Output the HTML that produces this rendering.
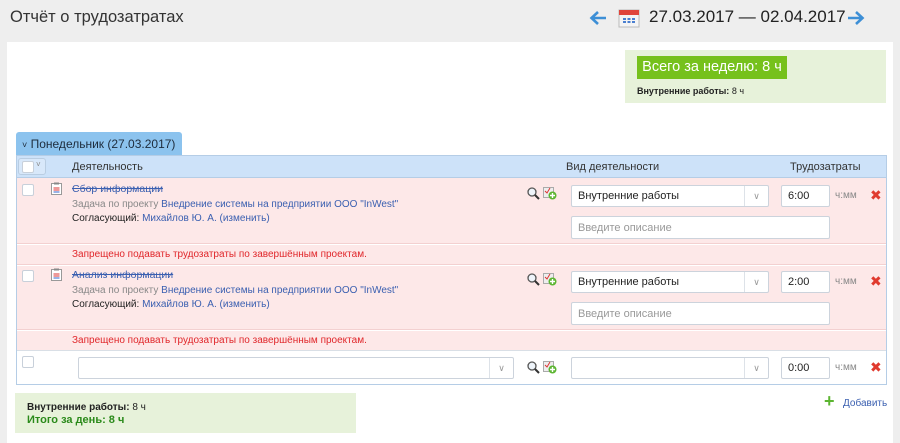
<!DOCTYPE html>
<html><head><meta charset="utf-8"><style>
*{box-sizing:border-box;margin:0;padding:0}
body{width:900px;height:443px;background:#eeeeee;font-family:"Liberation Sans","DejaVu Sans",sans-serif;position:relative;overflow:hidden;color:#222}
.a{position:absolute}
.panel{left:7px;top:42px;width:886px;height:401px;background:#fff}
.t11{font-size:11px}
.link{color:#3a5fb0}
.inp{position:absolute;background:#fff;border:1px solid #ccd3dc;border-radius:2px;font-size:11px;padding:0 6px;display:flex;align-items:center;color:#222}
.sel .arr{position:absolute;right:0;top:0;bottom:0;width:24px;border-left:1px solid #dde2e8;display:flex;align-items:center;justify-content:center;color:#999;font-size:9px}
.cb{position:absolute;width:12px;height:12px;border:1px solid #c8d0da;border-radius:2px;background:#fff}
.x{color:#e03a2e;font-size:14px;font-weight:bold}
.gray{color:#888}
.strike{text-decoration:line-through}
</style></head><body>
<div class="a" style="left:10px;top:8px;font-size:16.5px;color:#333">Отчёт о трудозатратах</div>
<svg class="a" style="left:588px;top:9px" width="20" height="18" viewBox="0 0 20 18"><path d="M18 9H4M10 3L3.5 9L10 15" stroke="#3d8fd6" stroke-width="2.6" fill="none"/></svg>
<svg class="a" style="left:618px;top:8px" width="22" height="20" viewBox="0 0 22 20"><rect x="1" y="2" width="20" height="17" fill="#f4f4f4" stroke="#bbb"/><rect x="1" y="2" width="20" height="5" fill="#e0443a"/><g fill="#4a7fd0"><rect x="5" y="10" width="3" height="2"/><rect x="9.5" y="10" width="3" height="2"/><rect x="14" y="10" width="3" height="2"/><rect x="5" y="13" width="3" height="2"/><rect x="9.5" y="13" width="3" height="2"/><rect x="14" y="13" width="3" height="2"/></g></svg>
<div class="a" style="left:649px;top:7px;font-size:17px;color:#222">27.03.2017 — 02.04.2017</div>
<svg class="a" style="left:846px;top:9px" width="20" height="18" viewBox="0 0 20 18"><path d="M2 9H16M10 3L16.5 9L10 15" stroke="#3d8fd6" stroke-width="2.6" fill="none"/></svg>
<div class="a panel"></div>
<div class="a" style="left:625px;top:50px;width:261px;height:53px;background:#e7f2da"></div>
<div class="a" style="left:637px;top:56px;width:150px;height:23px;background:#76c11c;color:#fff;font-size:14.5px;line-height:23px;text-align:center">Всего за неделю: 8 ч</div>
<div class="a" style="left:637px;top:86px;font-size:9px"><b>Внутренние работы:</b> 8 ч</div>

<div class="a" style="left:16px;top:132px;width:166px;height:24px;background:#8cc3ee;border-radius:3px 3px 0 0;font-size:12px;line-height:24px;padding-left:6px;color:#1e2c3c"><span style="font-size:9px">&#x2C5;</span> Понедельник (27.03.2017)</div>
<div class="a" style="left:16px;top:155px;width:871px;height:230px;border:1px solid #b5cde6;background:#fff"></div>
<div class="a" style="left:17px;top:156px;width:869px;height:22px;background:#cde2f9;border-bottom:1px solid #b5cde6"></div>
<div class="a" style="left:18px;top:158px;width:28px;height:17px;border:1px solid #b9cde2;border-radius:3px;background:#d8e8fa"></div>
<div class="cb" style="left:22px;top:161px"></div>
<div class="a gray" style="left:36px;top:160px;font-size:8px">&#x2C5;</div>
<div class="a t11" style="left:72px;top:161px;color:#333">Деятельность</div>
<div class="a t11" style="left:566px;top:161px;color:#333">Вид деятельности</div>
<div class="a t11" style="left:790px;top:161px;color:#333">Трудозатраты</div>

<div class="a" style="left:17px;top:178px;width:869px;height:66px;background:#fde8e8;border-bottom:1px solid #f3d0d0"></div>
<div class="a" style="left:17px;top:245px;width:869px;height:20px;background:#fde8e8;border-bottom:1px solid #f3d0d0"></div>
<div class="a" style="left:17px;top:266px;width:869px;height:64px;background:#fde8e8;border-bottom:1px solid #f3d0d0"></div>
<div class="a" style="left:17px;top:331px;width:869px;height:20px;background:#fde8e8;border-bottom:1px solid #d9dfe6"></div>

<div class="cb" style="left:22px;top:184px"></div>
<svg class="a" style="left:51px;top:182px" width="12" height="13"><rect x="0.5" y="1.5" width="10" height="11" fill="#fff" stroke="#999"/><rect x="3" y="0.5" width="5" height="2" fill="#888"/><path d="M2.5 6H8.5M2.5 8H8.5" stroke="#d33" stroke-width="1"/><path d="M2.5 10H8.5" stroke="#36c"/></svg>
<div class="a t11 link strike" style="left:72px;top:183px;font-size:10.5px">Сбор информации</div>
<div class="a" style="left:72px;top:199px;font-size:10px"><span class="gray">Задача по проекту</span> <span class="link">Внедрение системы на предприятии ООО "InWest"</span></div>
<div class="a" style="left:72px;top:213px;font-size:10px">Согласующий: <span class="link">Михайлов Ю. А. (изменить)</span></div>
<div class="a" style="left:72px;top:249px;font-size:10px;color:#e0262a">Запрещено подавать трудозатраты по завершённым проектам.</div>

<div class="cb" style="left:22px;top:270px"></div>
<svg class="a" style="left:51px;top:268px" width="12" height="13"><rect x="0.5" y="1.5" width="10" height="11" fill="#fff" stroke="#999"/><rect x="3" y="0.5" width="5" height="2" fill="#888"/><path d="M2.5 6H8.5M2.5 8H8.5" stroke="#d33" stroke-width="1"/><path d="M2.5 10H8.5" stroke="#36c"/></svg>
<div class="a t11 link strike" style="left:72px;top:269px;font-size:10.5px">Анализ информации</div>
<div class="a" style="left:72px;top:285px;font-size:10px"><span class="gray">Задача по проекту</span> <span class="link">Внедрение системы на предприятии ООО "InWest"</span></div>
<div class="a" style="left:72px;top:299px;font-size:10px">Согласующий: <span class="link">Михайлов Ю. А. (изменить)</span></div>
<div class="a" style="left:72px;top:335px;font-size:10px;color:#e0262a">Запрещено подавать трудозатраты по завершённым проектам.</div>

<div class="cb" style="left:22px;top:356px"></div>
<div class="inp sel" style="left:78px;top:357px;width:436px;height:22px"><span class="arr">&#x2228;</span></div>

<svg class="a" style="left:527px;top:187px" width="13" height="13"><circle cx="5" cy="5" r="4" fill="#eef4fa" stroke="#555" stroke-width="1.3"/><path d="M8 8L12 12" stroke="#333" stroke-width="2"/></svg>
<svg class="a" style="left:543px;top:186px" width="14" height="14"><rect x="0.5" y="1.5" width="10" height="10" fill="#eee" stroke="#aaa"/><path d="M2 5L4 7L7 2" stroke="#d33" fill="none"/><circle cx="9.5" cy="9.5" r="4" fill="#5cb531"/><path d="M9.5 7V12M7 9.5H12" stroke="#fff" stroke-width="1.4"/></svg>
<svg class="a" style="left:527px;top:273px" width="13" height="13"><circle cx="5" cy="5" r="4" fill="#eef4fa" stroke="#555" stroke-width="1.3"/><path d="M8 8L12 12" stroke="#333" stroke-width="2"/></svg>
<svg class="a" style="left:543px;top:272px" width="14" height="14"><rect x="0.5" y="1.5" width="10" height="10" fill="#eee" stroke="#aaa"/><path d="M2 5L4 7L7 2" stroke="#d33" fill="none"/><circle cx="9.5" cy="9.5" r="4" fill="#5cb531"/><path d="M9.5 7V12M7 9.5H12" stroke="#fff" stroke-width="1.4"/></svg>
<svg class="a" style="left:527px;top:361px" width="13" height="13"><circle cx="5" cy="5" r="4" fill="#eef4fa" stroke="#555" stroke-width="1.3"/><path d="M8 8L12 12" stroke="#333" stroke-width="2"/></svg>
<svg class="a" style="left:543px;top:360px" width="14" height="14"><rect x="0.5" y="1.5" width="10" height="10" fill="#eee" stroke="#aaa"/><path d="M2 5L4 7L7 2" stroke="#d33" fill="none"/><circle cx="9.5" cy="9.5" r="4" fill="#5cb531"/><path d="M9.5 7V12M7 9.5H12" stroke="#fff" stroke-width="1.4"/></svg>

<div class="inp sel" style="left:571px;top:185px;width:198px;height:22px">Внутренние работы<span class="arr">&#x2228;</span></div>
<div class="inp" style="left:571px;top:216px;width:259px;height:23px;color:#999">Введите описание</div>
<div class="inp" style="left:781px;top:185px;width:49px;height:22px">6:00</div>
<div class="a gray" style="left:835px;top:190px;font-size:10px">ч:мм</div>
<div class="a x" style="left:870px;top:187px">✖</div>

<div class="inp sel" style="left:571px;top:271px;width:198px;height:22px">Внутренние работы<span class="arr">&#x2228;</span></div>
<div class="inp" style="left:571px;top:302px;width:259px;height:23px;color:#999">Введите описание</div>
<div class="inp" style="left:781px;top:271px;width:49px;height:22px">2:00</div>
<div class="a gray" style="left:835px;top:276px;font-size:10px">ч:мм</div>
<div class="a x" style="left:870px;top:273px">✖</div>

<div class="inp sel" style="left:571px;top:357px;width:198px;height:22px"><span class="arr">&#x2228;</span></div>
<div class="inp" style="left:781px;top:357px;width:49px;height:22px">0:00</div>
<div class="a gray" style="left:835px;top:362px;font-size:10px">ч:мм</div>
<div class="a x" style="left:870px;top:359px">✖</div>

<div class="a" style="left:824px;top:394px;color:#5cb531;font-size:18px;font-weight:bold;line-height:14px">+</div>
<div class="a link" style="left:843px;top:398px;font-size:10px">Добавить</div>

<div class="a" style="left:15px;top:393px;width:341px;height:40px;background:#e7f2da"></div>
<div class="a" style="left:27px;top:402px;font-size:10px"><b>Внутренние работы:</b> 8 ч</div>
<div class="a" style="left:27px;top:414px;font-size:11px;font-weight:bold;color:#2a8a1a">Итого за день: 8 ч</div>
</body></html>
